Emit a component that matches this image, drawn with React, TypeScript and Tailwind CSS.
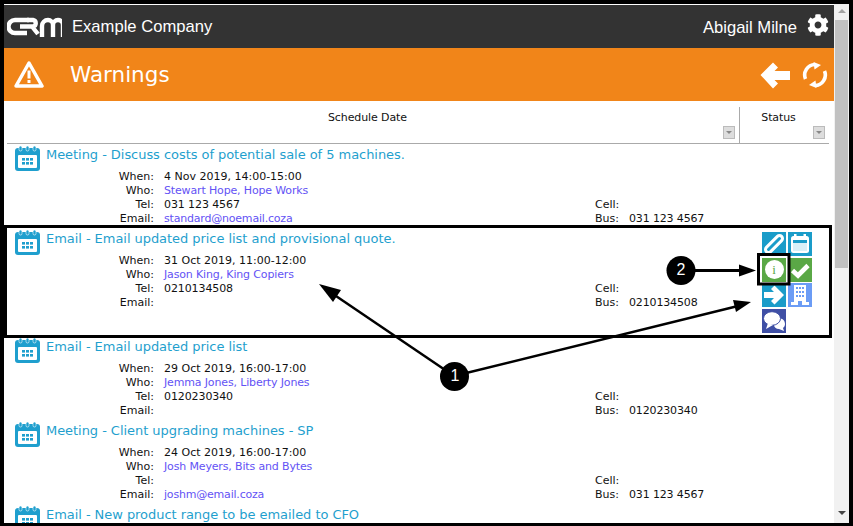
import React from 'react';
import { FaCog } from 'react-icons/fa';

type Item = {
  title: string;
  when?: string;
  who?: string;
  tel?: string;
  email?: string;
  bus?: string;
  actions?: boolean;
};

const items: Item[] = [
  {
    title: 'Meeting - Discuss costs of potential sale of 5 machines.',
    when: '4 Nov 2019, 14:00-15:00',
    who: 'Stewart Hope, Hope Works',
    tel: '031 123 4567',
    email: 'standard@noemail.coza',
    bus: '031 123 4567',
  },
  {
    title: 'Email - Email updated price list and provisional quote.',
    when: '31 Oct 2019, 11:00-12:00',
    who: 'Jason King, King Copiers',
    tel: '0210134508',
    bus: '0210134508',
    actions: true,
  },
  {
    title: 'Email - Email updated price list',
    when: '29 Oct 2019, 16:00-17:00',
    who: 'Jemma Jones, Liberty Jones',
    tel: '0120230340',
    bus: '0120230340',
  },
  {
    title: 'Meeting - Client upgrading machines - SP',
    when: '24 Oct 2019, 16:00-17:00',
    who: 'Josh Meyers, Bits and Bytes',
    email: 'joshm@email.coza',
    bus: '031 123 4567',
  },
  {
    title: 'Email - New product range to be emailed to CFO',
  },
];

const CalendarIcon = () => (
  <svg width="27" height="27" viewBox="0 0 27 27" className="shrink-0">
    <rect x="1" y="3" width="25" height="23" rx="3" fill="#1f9fce" />
    <rect x="4" y="10" width="19" height="13" rx="1" fill="#fff" />
    <rect x="5" y="1" width="3" height="5" rx="1.5" fill="#1f9fce" stroke="#fff" strokeWidth="0.6" />
    <rect x="12" y="1" width="3" height="5" rx="1.5" fill="#1f9fce" stroke="#fff" strokeWidth="0.6" />
    <rect x="19" y="1" width="3" height="5" rx="1.5" fill="#1f9fce" stroke="#fff" strokeWidth="0.6" />
    <g fill="#1f9fce">
      <rect x="8" y="13" width="3" height="2.6" />
      <rect x="12" y="13" width="3" height="2.6" />
      <rect x="16" y="13" width="3" height="2.6" />
      <rect x="8" y="17" width="3" height="2.6" />
      <rect x="12" y="17" width="3" height="2.6" />
      <rect x="16" y="17" width="3" height="2.6" />
    </g>
  </svg>
);

const ActionButtons = () => (
  <div className="grid grid-cols-[24px_24px] auto-rows-[24px] gap-x-[2px] gap-y-[1.67px] text-white">
    <div className="bg-[#1a9cc9]">
      <svg width="24" height="24" viewBox="0 0 24 24" fill="none" strokeLinecap="round">
        <path d="M6.5 17.5 L17.5 6.5" stroke="#fff" strokeWidth="9" />
        <path d="M6.5 17.5 L17.5 6.5" stroke="#1a9cc9" strokeWidth="3" />
      </svg>
    </div>
    <div className="bg-[#1a9cc9]">
      <svg width="24" height="24" viewBox="0 0 24 24">
        <rect x="3" y="4" width="18" height="17" rx="2.5" fill="#fff" />
        <rect x="5" y="8" width="14" height="3" fill="#1a9cc9" />
        <rect x="5" y="11" width="14" height="8" fill="#d9f0f8" />
        <rect x="6" y="2" width="2.5" height="4" fill="#fff" />
        <rect x="15.5" y="2" width="2.5" height="4" fill="#fff" />
      </svg>
    </div>
    <div className="flex items-center justify-center bg-[#5aa846]">
      <div className="flex h-[19px] w-[19px] items-center justify-center rounded-full bg-white font-['Liberation_Serif',serif] text-[13px] leading-none text-[#5aa846]">
        i
      </div>
    </div>
    <div className="bg-[#5aa846]">
      <svg width="24" height="24" viewBox="0 0 24 24" fill="none">
        <path d="M4.5 12.5 L10 17.5 L20 7.5" stroke="#fff" strokeWidth="4.6" />
      </svg>
    </div>
    <div className="bg-[#1a9cc9]">
      <svg width="24" height="24" viewBox="0 0 24 24">
        <path d="M22 12 L12.5 2.5 L9 6 L12 9 H2 V15 H12 L9 18 L12.5 21.5 Z" fill="#fff" />
      </svg>
    </div>
    <div className="bg-[#6b9cf5]">
      <svg width="24" height="24" viewBox="0 0 24 24">
        <path d="M6 2 H18 V22 H14 V18 H10 V22 H6 Z M3 22 H6 V19 H3 Z M18 22 H21 V19 H18 Z" fill="#fff" />
        <g fill="#6b9cf5">
          <rect x="8" y="4" width="2" height="2" />
          <rect x="11" y="4" width="2" height="2" />
          <rect x="14" y="4" width="2" height="2" />
          <rect x="8" y="8" width="2" height="2" />
          <rect x="11" y="8" width="2" height="2" />
          <rect x="14" y="8" width="2" height="2" />
          <rect x="8" y="12" width="2" height="2" />
          <rect x="11" y="12" width="2" height="2" />
          <rect x="14" y="12" width="2" height="2" />
        </g>
      </svg>
    </div>
    <div className="bg-[#3f4fa5]">
      <svg width="24" height="24" viewBox="0 0 24 24">
        <path d="M13 10 C18 8 23 10 23 15 C23 17 22 18 21 19 L22 22 L17 20 C14 20 12 18 12 16 Z" fill="#fff" />
        <ellipse cx="10" cy="9.5" rx="8.5" ry="6.8" fill="#fff" stroke="#3f4fa5" strokeWidth="1" />
        <path d="M6 14 L4 20 L11 16 Z" fill="#fff" />
      </svg>
    </div>
  </div>
);

const Row = ({ item }: { item: Item }) => (
  <div className={`relative shrink-0 pl-[10px] pr-[22px] pt-[1px] ${item.actions ? 'h-[108px]' : 'h-[84px]'}`}>
    <div className="flex items-start gap-[5px]">
      <CalendarIcon />
      <div className="pt-[1px] text-[13px] leading-[17px] tracking-[-0.05px] text-[#1f9fce]">{item.title}</div>
    </div>
    {item.when && (
      <div className="mt-[-2px] grid grid-cols-[140px_10px_431px_34px_1fr] text-[11px] leading-[14px] text-[#111]">
        <div className="text-right">When:</div>
        <div />
        <div className="col-span-3">{item.when}</div>
        <div className="text-right">Who:</div>
        <div />
        <div className="col-span-3 tracking-[-0.15px] text-[#6352f5]">{item.who}</div>
        <div className="text-right">Tel:</div>
        <div />
        <div className="tracking-[-0.1px]">{item.tel}</div>
        <div>Cell:</div>
        <div />
        <div className="text-right">Email:</div>
        <div />
        <div className="tracking-[-0.2px] text-[#6352f5]">{item.email}</div>
        <div>Bus:</div>
        <div className="tracking-[-0.15px]">{item.bus}</div>
      </div>
    )}
    {item.actions && (
      <div className="absolute left-[758px] top-[4px]">
        <ActionButtons />
      </div>
    )}
  </div>
);

const SortButton = () => (
  <div className="flex h-[13px] w-[12px] items-center justify-center border border-[#bbb] bg-[#ddd]">
    <div className="h-0 w-0 border-x-[3px] border-t-[3px] border-x-transparent border-t-[#888]" />
  </div>
);

const Annotations = () => (
  <svg width="853" height="526" viewBox="0 0 853 526" className="pointer-events-none absolute left-[-4px] top-[-4px]">
    <rect x="5.5" y="226.5" width="825" height="110" fill="none" stroke="#000" strokeWidth="3" />
    <rect x="758.5" y="254.5" width="30.5" height="29.5" fill="none" stroke="#000" strokeWidth="3" />
    <g stroke="#000" fill="none">
      <line x1="690" y1="270.5" x2="745" y2="270.5" strokeWidth="3" />
      <line x1="454" y1="376" x2="333" y2="294" strokeWidth="2.5" />
      <line x1="454" y1="376" x2="738" y2="306" strokeWidth="2.5" />
    </g>
    <g fill="#000">
      <polygon points="756,270.5 739,264.5 739,276.5" />
      <polygon points="319,284 341,290 333,302" />
      <polygon points="751,302 733,300 736,312" />
      <circle cx="454.5" cy="376.5" r="14.5" />
      <circle cx="681" cy="270.5" r="14.5" />
    </g>
  </svg>
);

export default function App() {
  return (
    <div className="relative flex h-[526px] w-[853px] overflow-hidden border-x-[4px] border-b-[3px] border-t-[4px] border-black bg-white font-['DejaVu_Sans',Verdana,sans-serif]">
      <div className="flex h-full w-[830px] shrink-0 flex-col pt-[1px]">
        <div className="flex h-[43px] shrink-0 items-center justify-between bg-[#333] pl-[3px] pr-[5px] text-white">
          <div className="flex items-center gap-[10px]">
            <svg width="55" height="20" viewBox="0 0 55 20" fill="none" stroke="#fff" strokeWidth="4.4">
              <path d="M22 3H8a6.5 6.5 0 0 0 0 13h12" />
              <path d="M13 9.5H26a3.3 3.3 0 0 0 0-6.5H20M25 9.5l6 7.5" />
              <path d="M35 20V9a6 6 0 0 1 6-6a5 5 0 0 1 5 5V20M46 8a5 5 0 0 1 10 0V20" />
            </svg>
            <span className="mt-[1px] font-['Liberation_Sans',sans-serif] text-[16.6px] leading-[20px]">Example Company</span>
          </div>
          <div className="flex items-center gap-[10px]">
            <span className="mt-[2px] font-['Liberation_Sans',sans-serif] text-[16.6px] leading-[20px]">Abigail Milne</span>
            <FaCog size={22} className="mb-[4px]" />
          </div>
        </div>
        <div className="flex h-[53px] shrink-0 items-center justify-between bg-[#f18519] pl-[10px] pr-[6px] text-white">
          <div className="flex items-center gap-[26px]">
            <svg width="30" height="30" viewBox="0 0 30 30">
              <path d="M15 3 L28 26 H2 Z" fill="none" stroke="#fff" strokeWidth="3.5" strokeLinejoin="round" />
              <rect x="13.5" y="10.5" width="3" height="8" fill="#fff" />
              <rect x="13.5" y="20" width="3" height="3" fill="#fff" />
            </svg>
            <span className="text-[21.5px] leading-[26px]">Warnings</span>
          </div>
          <div className="flex items-center gap-[12px]">
            <svg width="30" height="30" viewBox="0 0 30 30">
              <path d="M0.5 15 L13 2.5 L18 7.5 L14.5 11 H30 V20 H14.5 L18 23.5 L13 28.5 Z" fill="#fff" />
            </svg>
            <svg width="26" height="26" viewBox="0 0 26 26" fill="none">
              <path d="M3.5 17 A10.5 10.5 0 0 1 13 2.5" stroke="#fff" strokeWidth="3.6" />
              <path d="M22.5 9 A10.5 10.5 0 0 1 13 23.5" stroke="#fff" strokeWidth="3.6" />
              <polygon points="11.5,0 19,3 12.5,7.5" fill="#fff" />
              <polygon points="14.5,26 7,23 13.5,18.5" fill="#fff" />
            </svg>
          </div>
        </div>
        <div className="ml-[3px] mr-[5px] flex h-[43px] shrink-0 border-b border-[#aaa] text-[11px] leading-[14px] tracking-[-0.1px] text-[#111]">
          <div className="relative flex-1 pr-[11px] pt-[10px] text-center">
            Schedule Date
            <div className="absolute bottom-[4px] right-[4px]">
              <SortButton />
            </div>
          </div>
          <div className="relative mt-[6px] w-[90px] border-l border-[#aaa] pr-[12px] pt-[4px] text-center">
            Status
            <div className="absolute bottom-[4px] right-[4px]">
              <SortButton />
            </div>
          </div>
        </div>
        <div className="flex-1 overflow-hidden">
          {items.map((item) => (
            <Row key={item.title} item={item} />
          ))}
        </div>
      </div>
      <div className="flex w-[15px] shrink-0 flex-col items-center bg-[#f1f1f1] pt-[5px]">
        <div className="h-0 w-0 border-x-[4px] border-b-[4px] border-x-transparent border-b-[#a3a3a3]" />
        <div className="mt-[7px] h-[248px] w-[13px] bg-[#c1c1c1]" />
        <div className="mb-[8px] mt-auto h-0 w-0 border-x-[4px] border-t-[4px] border-x-transparent border-t-[#444]" />
      </div>
      <Annotations />
      <div className="absolute left-[443px] top-[362px] w-[16px] text-center font-['Liberation_Sans',sans-serif] text-[16px] leading-[20px] text-white">1</div>
      <div className="absolute left-[669px] top-[256px] w-[16px] text-center font-['Liberation_Sans',sans-serif] text-[16px] leading-[20px] text-white">2</div>
    </div>
  );
}
